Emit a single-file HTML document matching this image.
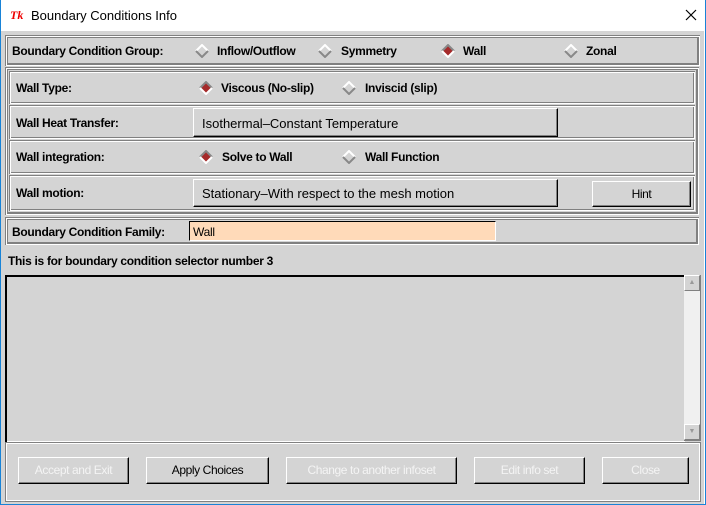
<!DOCTYPE html>
<html><head><meta charset="utf-8"><style>
*{margin:0;padding:0;box-sizing:border-box}
body{width:706px;height:505px;overflow:hidden;background:#fff;font-family:"Liberation Sans",Arial,sans-serif;position:relative}
.win{position:absolute;left:0;top:0;width:706px;height:505px;border:1px solid #1883d7;border-top:none}
.title{position:absolute;left:1px;top:0;width:704px;height:31px;background:#fff}
.body{position:absolute;left:1px;top:31px;width:703px;height:473px;background:#d4d4d4}
.a{position:absolute}
.fr{position:absolute;box-shadow:inset 1px 1px #808080,inset -1px -1px #fff,inset 2px 2px #fff,inset -2px -2px #808080,inset 3px 3px #808080,inset -3px -3px #808080}
.row{position:absolute;box-shadow:inset 1px 1px #808080,inset -1px -1px #fff,inset 2px 2px #fff,inset -2px -2px #808080}
.b{font-weight:bold;font-size:12px;color:#000;letter-spacing:-0.3px}
.btn{position:absolute;background:#d4d4d4;border:1px solid;border-color:#fff #000 #000 #fff;box-shadow:inset -1px -1px #808080;font-size:13px;color:#000}
.pb{position:absolute;background:#d4d4d4;border:1px solid;border-color:#fff #000 #000 #fff;box-shadow:inset -1px -1px #808080;font-size:12px;text-align:center;line-height:25px;color:#000;letter-spacing:-0.4px}
.dis{color:#f4f4f4;text-shadow:none}
svg.d{position:absolute;width:14px;height:14px}
</style></head><body>
<div class="win"></div>
<div class="title">
<div class="a" style="left:9px;top:8px;color:#e00;font-style:italic;font-weight:bold;font-size:12px;font-family:'Liberation Serif',serif">Tk</div>
<div class="a" style="left:30px;top:8px;font-size:13px;color:#000">Boundary Conditions Info</div>
<svg class="a" style="left:684px;top:9px" width="12" height="12" viewBox="0 0 12 12"><path d="M1 1L11 11M11 1L1 11" stroke="#000" stroke-width="1.2"/></svg>
</div>
<div class="body"></div>

<div class="fr" style="left:5px;top:35px;width:695px;height:31px"></div>
<div class="a b" style="left:12px;top:44px">Boundary Condition Group:</div>
<svg class="d" style="left:195px;top:44px" viewBox="0 0 14 14"><path d="M7 1L13 7L7 13L1 7Z" fill="#d4d4d4"/><path d="M1 7L7 1L13 7" stroke="#fff" stroke-width="2" fill="none"/><path d="M1 7L7 13L13 7" stroke="#888" stroke-width="2" fill="none"/></svg>
<div class="a b" style="left:217px;top:44px">Inflow/Outflow</div>
<svg class="d" style="left:318px;top:44px" viewBox="0 0 14 14"><path d="M7 1L13 7L7 13L1 7Z" fill="#d4d4d4"/><path d="M1 7L7 1L13 7" stroke="#fff" stroke-width="2" fill="none"/><path d="M1 7L7 13L13 7" stroke="#888" stroke-width="2" fill="none"/></svg>
<div class="a b" style="left:341px;top:44px">Symmetry</div>
<svg class="d" style="left:441px;top:44px" viewBox="0 0 14 14"><path d="M7 1L13 7L7 13L1 7Z" fill="#a52a2a"/><path d="M1 7L7 1L13 7" stroke="#888" stroke-width="2" fill="none"/><path d="M1 7L7 13L13 7" stroke="#fff" stroke-width="2" fill="none"/></svg>
<div class="a b" style="left:463px;top:44px">Wall</div>
<svg class="d" style="left:564px;top:44px" viewBox="0 0 14 14"><path d="M7 1L13 7L7 13L1 7Z" fill="#d4d4d4"/><path d="M1 7L7 1L13 7" stroke="#fff" stroke-width="2" fill="none"/><path d="M1 7L7 13L13 7" stroke="#888" stroke-width="2" fill="none"/></svg>
<div class="a b" style="left:586px;top:44px">Zonal</div>

<div class="fr" style="left:5px;top:67px;width:694px;height:148px"></div>
<div class="row" style="left:9px;top:71px;width:686px;height:33px"></div>
<div class="row" style="left:9px;top:105px;width:686px;height:34px"></div>
<div class="row" style="left:9px;top:140px;width:686px;height:34px"></div>
<div class="row" style="left:9px;top:175px;width:686px;height:36px"></div>

<div class="a b" style="left:16px;top:81px">Wall Type:</div>
<svg class="d" style="left:199px;top:81px" viewBox="0 0 14 14"><path d="M7 1L13 7L7 13L1 7Z" fill="#a52a2a"/><path d="M1 7L7 1L13 7" stroke="#888" stroke-width="2" fill="none"/><path d="M1 7L7 13L13 7" stroke="#fff" stroke-width="2" fill="none"/></svg>
<div class="a b" style="left:221px;top:81px">Viscous (No-slip)</div>
<svg class="d" style="left:342px;top:81px" viewBox="0 0 14 14"><path d="M7 1L13 7L7 13L1 7Z" fill="#d4d4d4"/><path d="M1 7L7 1L13 7" stroke="#fff" stroke-width="2" fill="none"/><path d="M1 7L7 13L13 7" stroke="#888" stroke-width="2" fill="none"/></svg>
<div class="a b" style="left:365px;top:81px">Inviscid (slip)</div>

<div class="a b" style="left:16px;top:116px">Wall Heat Transfer:</div>
<div class="btn" style="left:193px;top:108px;width:365px;height:29px;padding:7px 0 0 8px">Isothermal–Constant Temperature</div>

<div class="a b" style="left:16px;top:150px">Wall integration:</div>
<svg class="d" style="left:199px;top:150px" viewBox="0 0 14 14"><path d="M7 1L13 7L7 13L1 7Z" fill="#a52a2a"/><path d="M1 7L7 1L13 7" stroke="#888" stroke-width="2" fill="none"/><path d="M1 7L7 13L13 7" stroke="#fff" stroke-width="2" fill="none"/></svg>
<div class="a b" style="left:222px;top:150px">Solve to Wall</div>
<svg class="d" style="left:342px;top:150px" viewBox="0 0 14 14"><path d="M7 1L13 7L7 13L1 7Z" fill="#d4d4d4"/><path d="M1 7L7 1L13 7" stroke="#fff" stroke-width="2" fill="none"/><path d="M1 7L7 13L13 7" stroke="#888" stroke-width="2" fill="none"/></svg>
<div class="a b" style="left:365px;top:150px">Wall Function</div>

<div class="a b" style="left:16px;top:186px">Wall motion:</div>
<div class="btn" style="left:193px;top:179px;width:365px;height:28px;padding:6px 0 0 8px">Stationary–With respect to the mesh motion</div>
<div class="pb" style="left:592px;top:181px;width:99px;height:26px">Hint</div>

<div class="fr" style="left:5px;top:217px;width:694px;height:28px"></div>
<div class="a b" style="left:12px;top:225px">Boundary Condition Family:</div>
<div class="a" style="left:189px;top:221px;width:307px;height:20px;background:#ffdab9;border:1px solid;border-color:#000 #fff #fff #000;font-size:12px;padding:3px 0 0 3px;letter-spacing:-0.3px">Wall</div>

<div class="a b" style="left:8px;top:254px">This is for boundary condition selector number 3</div>

<div class="a" style="left:5px;top:275px;width:680px;height:167px;background:#d4d4d4;border-top:2px solid #000;border-left:2px solid #000;box-shadow:inset -1px -1px #fff"></div>
<div class="a" style="left:684px;top:275px;width:17px;height:166px;background:#f0f0f0;border-right:1px solid #808080;border-bottom:1px solid #808080"></div>
<div class="a" style="left:684px;top:275px;width:16px;height:16px;background:#d4d4d4;border:1px solid;border-color:#fff #808080 #808080 #fff;font-size:7px;color:#999;text-align:center;line-height:14px">▲</div>
<div class="a" style="left:684px;top:424px;width:16px;height:16px;background:#d4d4d4;border:1px solid;border-color:#fff #808080 #808080 #fff;font-size:7px;color:#999;text-align:center;line-height:14px">▼</div>

<div class="fr" style="left:5px;top:442px;width:696px;height:60px;box-shadow:inset 1px 1px #808080,inset -1px -1px #808080,inset 2px 2px #fff,inset -2px -2px #fff"></div>
<div class="pb dis" style="left:18px;top:457px;width:111px;height:27px">Accept and Exit</div>
<div class="pb" style="left:146px;top:457px;width:123px;height:27px">Apply Choices</div>
<div class="pb dis" style="left:286px;top:457px;width:171px;height:27px">Change to another infoset</div>
<div class="pb dis" style="left:474px;top:457px;width:111px;height:27px">Edit info set</div>
<div class="pb dis" style="left:602px;top:457px;width:87px;height:27px">Close</div>
</body></html>
